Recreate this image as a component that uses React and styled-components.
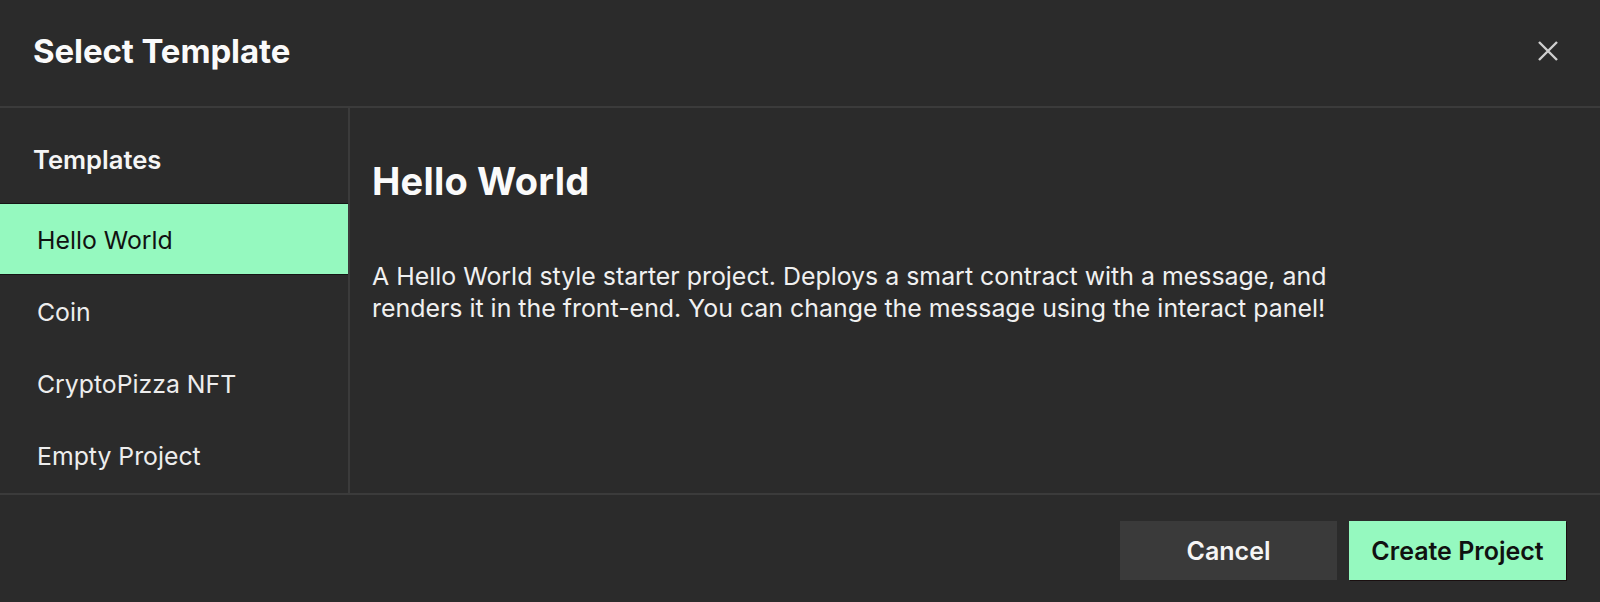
import React, { useState } from "react";
import styled, { createGlobalStyle } from "styled-components";

const GlobalStyle = createGlobalStyle`
  body {
    margin: 0;
    background: #2b2b2b;
    font-family: Inter, "Noto Sans", sans-serif;
    color: #f2f2f2;
  }
`;

const templates = [
  {
    name: "Hello World",
    description:
      "A Hello World style starter project. Deploys a smart contract with a message, and renders it in the front-end. You can change the message using the interact panel!",
  },
  { name: "Coin", description: "" },
  { name: "CryptoPizza NFT", description: "" },
  { name: "Empty Project", description: "" },
];

const Modal = styled.div`
  width: 1600px;
  height: 602px;
  background: #2b2b2b;
  display: flex;
  flex-direction: column;
`;

const Header = styled.div`
  height: 108px;
  box-sizing: border-box;
  display: flex;
  align-items: center;
  justify-content: space-between;
  padding: 0 37px 4px 33px;
  border-bottom: 2px solid #3b3b3b;
`;

const Title = styled.h2`
  margin: 0;
  font-size: 33px;
  font-weight: 700;
  letter-spacing: -0.1px;
  color: #fafafa;
`;

const CloseBtn = styled.button`
  background: none;
  border: 0;
  padding: 0;
  width: 30px;
  height: 30px;
  display: flex;
  align-items: center;
  justify-content: center;
  cursor: pointer;
  color: #cfcfcf;
`;

const Body = styled.div`
  display: flex;
  height: 385px;
  border-bottom: 2px solid #3b3b3b;
`;

const Sidebar = styled.div`
  width: 348px;
  flex-shrink: 0;
  border-right: 2px solid #3b3b3b;
  display: flex;
  flex-direction: column;
`;

const SideTitle = styled.div`
  height: 95px;
  display: flex;
  align-items: center;
  padding: 8px 0 0 33px;
  box-sizing: border-box;
  font-size: 25.6px;
  font-weight: 600;
  color: #f5f5f5;
`;

const Item = styled.div`
  height: 72px;
  display: flex;
  align-items: center;
  padding: 2px 0 0 37px;
  font-size: 24.8px;
  box-sizing: border-box;
  cursor: pointer;
  background: ${(p) => (p.$active ? "#95f9bf" : "transparent")};
  color: ${(p) => (p.$active ? "#111" : "#ededed")};
  border-top: 1px solid ${(p) => (p.$active ? "#151515" : "transparent")};
  border-bottom: 1px solid ${(p) => (p.$active ? "#151515" : "transparent")};
`;

const Content = styled.div`
  flex: 1;
  padding: 50px 0 0 22px;
`;

const Heading = styled.h1`
  margin: 0;
  font-size: 38px;
  font-weight: 700;
  color: #fafafa;
  letter-spacing: 0.2px;
`;

const Description = styled.p`
  margin: 56px 0 0;
  max-width: 990px;
  font-size: 24.9px;
  line-height: 32px;
  color: #f0f0f0;
`;

const Footer = styled.div`
  flex: 1;
  display: flex;
  justify-content: flex-end;
  align-items: flex-start;
  gap: 12px;
  padding: 26px 34px 0 0;
`;

const Btn = styled.button`
  width: 217px;
  height: 59px;
  border: 0;
  font-family: inherit;
  font-size: 25px;
  font-weight: 600;
  cursor: pointer;
  background: ${(p) => (p.$primary ? "#95f9bf" : "#3a3a3a")};
  color: ${(p) => (p.$primary ? "#111" : "#f5f5f5")};
  box-shadow: ${(p) => (p.$primary ? "1px 1px 0 #1a0f10" : "none")};
`;

const App = () => {
  const [selected, setSelected] = useState(0);
  const current = templates[selected];

  return (
    <Modal>
      <GlobalStyle />
      <Header>
        <Title>Select Template</Title>
        <CloseBtn aria-label="Close">
          <svg width="22" height="22" viewBox="0 0 22 22">
            <path
              d="M2 2 L20 20 M20 2 L2 20"
              stroke="currentColor"
              strokeWidth="2.4"
            />
          </svg>
        </CloseBtn>
      </Header>
      <Body>
        <Sidebar>
          <SideTitle>Templates</SideTitle>
          {templates.map((t, i) => (
            <Item
              key={t.name}
              $active={i === selected}
              onClick={() => setSelected(i)}
            >
              {t.name}
            </Item>
          ))}
        </Sidebar>
        <Content>
          <Heading>{current.name}</Heading>
          <Description>{current.description}</Description>
        </Content>
      </Body>
      <Footer>
        <Btn>Cancel</Btn>
        <Btn $primary>Create Project</Btn>
      </Footer>
    </Modal>
  );
};

export default App;
